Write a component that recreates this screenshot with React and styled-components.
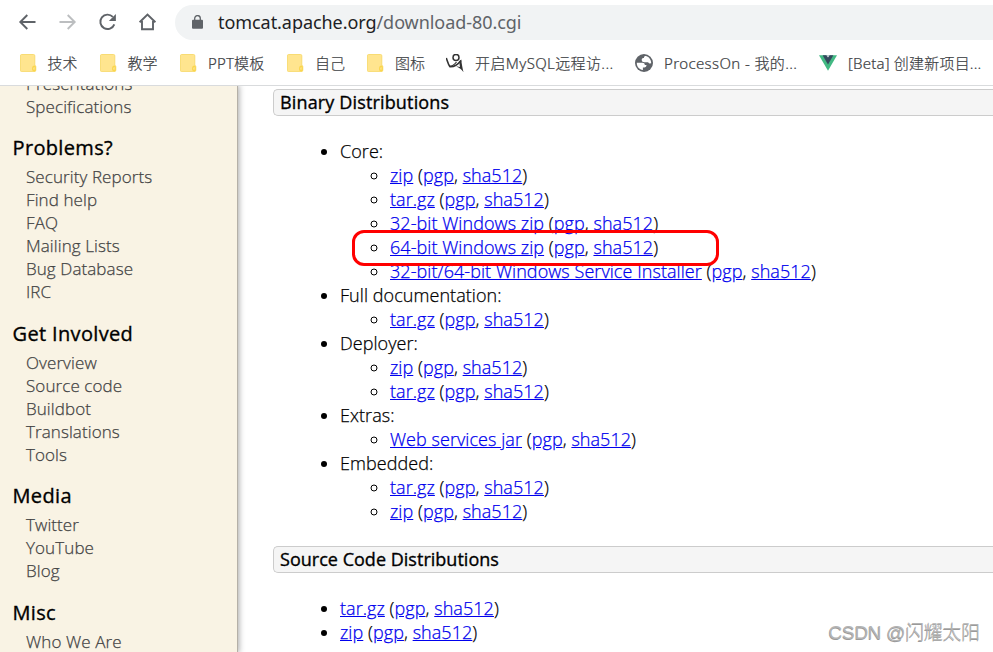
import React from "react";
import styled, { createGlobalStyle } from "styled-components";

const GlobalStyle = createGlobalStyle`
  * { box-sizing: border-box; }
  body { margin: 0; background: #fff; overflow: hidden; }
`;

const Window = styled.div`
  position: relative;
  display: flex;
  flex-direction: column;
  width: 993px;
  height: 652px;
  overflow: hidden;
  background: #fff;
  font-family: "Open Sans", "Noto Sans CJK SC", sans-serif;
`;

const Chrome = styled.header`
  flex: none;
  height: 86px;
  border-bottom: 1px solid #d9dbdd;
`;

const Toolbar = styled.div`
  display: flex;
  align-items: center;
  height: 44px;
  padding-left: 17px;
`;

const ToolIcon = styled.svg`
  flex: none;
  display: block;
  width: 20px;
  height: 20px;
  margin-right: 20px;
  fill: none;
  stroke: ${(p) => (p.$dim ? "#bcbec0" : "#5f6368")};
  stroke-width: 1.9;
`;

const AddressBar = styled.div`
  flex: 1;
  display: flex;
  align-items: center;
  height: 35px;
  margin-left: -2px;
  padding-left: 17px;
  border-radius: 18px 0 0 18px;
  background: #f1f3f4;
`;

const Lock = styled.svg`
  width: 11px;
  height: 14px;
  margin-right: 15px;
`;

const Url = styled.span`
  font-family: "Noto Sans", sans-serif;
  font-size: 18px;
  letter-spacing: -0.06px;
  line-height: 24px;
  color: #5f6368;
  white-space: pre;
`;

const Domain = styled.span`
  color: #202124;
`;

const Bookmarks = styled.nav`
  display: flex;
  align-items: center;
  height: 37px;
  padding-left: 20px;
`;

const Bookmark = styled.div`
  flex: none;
  display: flex;
  align-items: center;
  width: ${(p) => p.$width}px;
`;

const BookmarkIcon = styled.svg`
  flex: none;
  display: block;
  width: 18px;
  height: 18px;
`;

const BookmarkText = styled.span`
  margin-left: ${(p) => p.$gap}px;
  font-family: "Noto Sans", "Noto Sans CJK SC", sans-serif;
  font-size: 15px;
  font-weight: 300;
  letter-spacing: ${(p) => p.$track || 0}px;
  line-height: 22px;
  color: #3c4043;
  white-space: pre;
  -webkit-text-stroke: 0.2px #3c4043;
`;

const Page = styled.div`
  flex: 1;
  min-height: 0;
  display: flex;
  overflow: hidden;
`;

const Sidebar = styled.aside`
  flex: none;
  width: 238px;
  border-right: 1px solid #b5b0a7;
  background: #f9f3e4;
  box-shadow: 0 0 6px 1px rgba(0, 0, 0, 0.35);
`;

const SideInner = styled.div`
  margin-top: -14.4px;
`;

const SideGroup = styled.section`
  padding-bottom: 17.4px;
`;

const SideTitle = styled.h2`
  margin: 0 0 4.2px;
  padding-left: 12.5px;
  font-size: 20px;
  font-weight: 500;
  letter-spacing: 0.35px;
  line-height: 26px;
  color: #000;
  -webkit-text-stroke: 0.35px #000;
`;

const SideLink = styled.a`
  display: block;
  padding-left: 26px;
  font-size: 17px;
  font-weight: 300;
  letter-spacing: 0.09px;
  line-height: 23px;
  color: #444;
  text-decoration: none;
  -webkit-text-stroke: 0.25px #444;
`;

const Main = styled.main`
  flex: 1;
  min-width: 0;
  padding: 3px 0 0 35px;
`;

const SectionTitle = styled.h3`
  height: 27px;
  margin: 0;
  padding-left: 6px;
  border: 1px solid #ccc;
  border-right: 0;
  border-radius: 5px 0 0 5px;
  background: #f5f5f5;
  font-size: 18px;
  font-weight: 500;
  letter-spacing: ${(p) => p.$track}px;
  line-height: 25px;
  color: #000;
  -webkit-text-stroke: 0.35px #000;
`;

const List = styled.ul`
  margin: 23px 0 23px;
  padding-left: 67px;
  list-style: disc;
  font-size: 18px;
  font-weight: 300;
  letter-spacing: 0.06px;
  line-height: 24px;
  color: #000;
  -webkit-text-stroke: 0.25px;
`;

const SubList = styled.ul`
  margin: 0;
  padding-left: 50px;
  list-style: circle;
`;

const Row = styled.li`
  white-space: nowrap;
`;

const Link = styled.a`
  color: #00e;
  text-decoration: underline;
`;

const Highlight = styled.div`
  position: absolute;
  left: 352px;
  top: 230px;
  width: 367px;
  height: 36px;
  border: 3px solid #f00;
  border-radius: 12px;
`;

const Watermark = styled.div`
  position: absolute;
  right: 13px;
  bottom: 6px;
  font-family: "Liberation Sans", "Noto Sans CJK SC", sans-serif;
  font-size: 19px;
  font-weight: 300;
  letter-spacing: -0.3px;
  line-height: 26px;
  color: #b4b4b4;
  text-shadow: -0.5px 0.5px 0 #9a9a9a;
`;

function FolderIcon() {
  return (
    <BookmarkIcon viewBox="0 0 18 18">
      <path d="M1.500.5h12a1.300 1.300 0 0 1 1.300 1.300v9.500a1.400 1.400 0 0 1 1 1.500v3.300a1.500 1.500 0 0 1-1.500 1.500H1.500A1.200 1.200 0 0 1 .4 16.400V1.700A1.200 1.200 0 0 1 1.500.5Z" fill="#ffe58f" stroke="#f7d96a" strokeWidth=".9" />
      <path d="M13 17c-1-.3-1-1.500-.9-3 .1-1.500.8-2.500 2.400-2.500 1 .2 1.300 1 1.300 2v2.500c0 .9-.7 1.500-1.500 1.500Z" fill="#fad64e" />
      <path d="M13.300 14.800c.1-1 .500-1.600 1.200-1.800v2.500c-.5.4-1.200.2-1.200-.7Z" fill="#ffe99e" />
    </BookmarkIcon>
  );
}

function FigureIcon() {
  return (
    <BookmarkIcon viewBox="0 0 18 18">
      <circle cx="10" cy="3.400" r="3" fill="none" stroke="#333" strokeWidth="1.500" />
      <path d="M.3 4C1.600 7.500 2.200 10.500 4 12.700c3.500.2 7.200-1.200 11-6.200" fill="none" stroke="#333" strokeWidth="1.600" />
      <path d="M3 12.200c2.500.2 5-1 7.500-4.200" fill="none" stroke="#333" strokeWidth="1.200" />
      <path d="M15.300 5.500c.3 4.500 1.300 8.500 2.200 12.800-1.600-2.600-4-4.600-7.300-5.800 1.700-.3 2.900 0 3.800.6-.5-2-.6-4-.6-5.800Z" fill="#333" />
    </BookmarkIcon>
  );
}

function GlobeIcon() {
  return (
    <BookmarkIcon viewBox="0 0 18 18">
      <circle cx="9" cy="9" r="9" fill="#5f6368" />
      <path d="M1.800 8.800h5.500c1.700 0 2.500.8 2.500 2.300h1.700c0 1.600-.8 2.500-2.300 2.500H7.900v2.500C4.300 15.700 1.700 12.700 1.800 8.800Z" fill="#fff" />
      <path d="M11 2.100c3.200.9 5.200 3.800 5.200 7.200-1.200.3-2.500.1-3.100-1.100H9.600c-1.900 0-2.900-.8-2.900-2.500 0-1.200.7-1.800 2.200-1.800 0-1.200.6-1.800 2.100-1.800Z" fill="#fff" />
    </BookmarkIcon>
  );
}

function VueIcon() {
  return (
    <BookmarkIcon viewBox="0 0 18 18">
      <path d="M0 1.200h18L9 16.800Z" fill="#42b983" />
      <path d="M3.600 1.200h10.800L9 10.500Z" fill="#35495e" />
      <path d="M7.300 1.200h3.400L9 3.600Z" fill="#dfe4e8" />
    </BookmarkIcon>
  );
}

const bookmarks = [
  { text: "技术", Icon: FolderIcon, width: 80, gap: 9.4 },
  { text: "教学", Icon: FolderIcon, width: 80, gap: 9.4 },
  { text: "PPT模板", Icon: FolderIcon, width: 107, gap: 10, track: 0.15 },
  { text: "自己", Icon: FolderIcon, width: 80, gap: 10 },
  { text: "图标", Icon: FolderIcon, width: 79, gap: 10 },
  { text: "开启MySQL远程访...", Icon: FigureIcon, width: 189, gap: 11, track: 0.38 },
  { text: "ProcessOn - 我的...", Icon: GlobeIcon, width: 184, gap: 11, track: 0.38 },
  { text: "[Beta] 创建新项目...", Icon: VueIcon, width: 170, gap: 11, track: 0.2 },
];

const sidebar = [
  { links: ["Presentations", "Specifications"] },
  { title: "Problems?", links: ["Security Reports", "Find help", "FAQ", "Mailing Lists", "Bug Database", "IRC"] },
  { title: "Get Involved", links: ["Overview", "Source code", "Buildbot", "Translations", "Tools"] },
  { title: "Media", links: ["Twitter", "YouTube", "Blog"] },
  { title: "Misc", links: ["Who We Are"] },
];

const binaries = [
  { name: "Core:", files: ["zip", "tar.gz", "32-bit Windows zip", "64-bit Windows zip", "32-bit/64-bit Windows Service Installer"] },
  { name: "Full documentation:", files: ["tar.gz"] },
  { name: "Deployer:", files: ["zip", "tar.gz"] },
  { name: "Extras:", files: ["Web services jar"] },
  { name: "Embedded:", files: ["tar.gz", "zip"] },
];

function FileRow({ name }) {
  return (
    <Row>
      <Link>{name}</Link> (<Link>pgp</Link>, <Link>sha512</Link>)
    </Row>
  );
}

export default function App() {
  return (
    <Window>
      <GlobalStyle />
      <Chrome>
        <Toolbar>
          <ToolIcon viewBox="0 0 20 20"><path d="M18.500 10H3.500M10.300 3 3.300 10l7 7" /></ToolIcon>
          <ToolIcon viewBox="0 0 20 20" $dim><path d="M2.500 10h15M10.700 3l7 7-7 7" /></ToolIcon>
          <ToolIcon viewBox="0 0 20 20">
            <path d="M17.300 12.300A7.200 7.200 0 1 1 15.800 4.900" />
            <path d="M18.900 2v7h-7Z" fill="#5f6368" stroke="none" />
          </ToolIcon>
          <ToolIcon viewBox="0 0 20 20"><path d="M2.600 10.300 10.500 2.600l7.900 7.700M5 9v8.300h11V9" /></ToolIcon>
          <AddressBar>
            <Lock viewBox="0 0 11 14">
              <rect y="4.800" width="11" height="9" rx="1" fill="#5f6368" />
              <path d="M2.700 5.500V3.400a2.800 2.800 0 0 1 5.600 0v2.100" fill="none" stroke="#5f6368" strokeWidth="1.300" />
            </Lock>
            <Url><Domain>tomcat.apache.org</Domain>/download-80.cgi</Url>
          </AddressBar>
        </Toolbar>
        <Bookmarks>
          {bookmarks.map(({ text, Icon, width, gap, track }) => (
            <Bookmark key={text} $width={width}>
              <Icon />
              <BookmarkText $gap={gap} $track={track}>{text}</BookmarkText>
            </Bookmark>
          ))}
        </Bookmarks>
      </Chrome>
      <Page>
        <Sidebar>
          <SideInner>
            {sidebar.map(({ title, links }) => (
              <SideGroup key={title || "top"}>
                {title && <SideTitle>{title}</SideTitle>}
                {links.map((l) => <SideLink key={l}>{l}</SideLink>)}
              </SideGroup>
            ))}
          </SideInner>
        </Sidebar>
        <Main>
          <SectionTitle $track={0.15}>Binary Distributions</SectionTitle>
          <List>
            {binaries.map(({ name, files }) => (
              <Row key={name}>
                {name}
                <SubList>{files.map((f) => <FileRow key={f} name={f} />)}</SubList>
              </Row>
            ))}
          </List>
          <SectionTitle $track={0.02}>Source Code Distributions</SectionTitle>
          <List>
            <FileRow name="tar.gz" />
            <FileRow name="zip" />
          </List>
        </Main>
      </Page>
      <Highlight />
      <Watermark>CSDN @闪耀太阳</Watermark>
    </Window>
  );
}
